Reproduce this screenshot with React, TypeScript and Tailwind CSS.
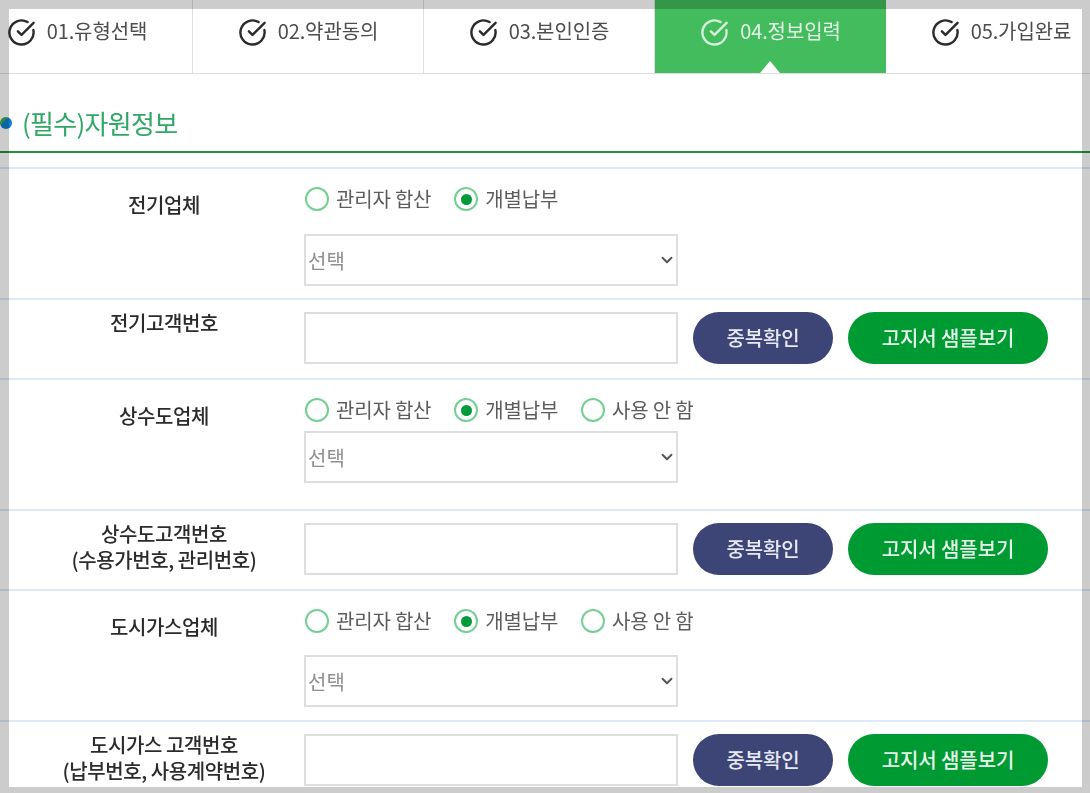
import { ChevronDown, CircleCheckBig } from 'lucide-react'

const font = { fontFamily: '"Noto Sans CJK KR", "Noto Sans", sans-serif' }

const steps = ['01.유형선택', '02.약관동의', '03.본인인증', '04.정보입력', '05.가입완료']

function StepTabs() {
  return (
    <div className="flex h-[74px] -ml-[38px] w-[1155px] border-b border-[#dedede]">
      {steps.map((s, i) => {
        const active = i === 3
        return (
          <div
            key={s}
            className={
              active
                ? 'relative flex w-[231px] shrink-0 justify-center gap-[11px] pt-[18px] bg-[#43bc5d] text-[#e4f6e8]'
                : 'flex w-[231px] shrink-0 justify-center gap-[11px] pt-[18px] border-r border-[#dedede] text-[#4d4d4d]'
            }
          >
            <CircleCheckBig size={29} strokeWidth={2} className={active ? 'text-[#d5f0da]' : 'text-[#2b2b2b]'} />
            <span className="text-[20px] leading-[26px] tracking-[-0.1px]">{s}</span>
            {active && (
              <span className="absolute bottom-0 left-[105px] h-0 w-0 border-x-[10px] border-b-[12px] border-x-transparent border-b-white" />
            )}
          </div>
        )
      })}
    </div>
  )
}

function Radio({ label, checked }: { label: string; checked?: boolean }) {
  return (
    <label className="flex items-center gap-[7px]">
      <span className="flex h-[24px] w-[24px] items-center justify-center rounded-full border-2 border-[#74cf92] bg-white">
        {checked && <span className="h-[11px] w-[11px] rounded-full bg-[#009a3a]" />}
      </span>
      <span className="text-[20px] leading-[24px] tracking-[-0.2px] text-[#5c5c5c]">{label}</span>
    </label>
  )
}

function Radios({ third }: { third?: boolean }) {
  return (
    <div className="flex gap-[23px] pl-[1px]">
      <Radio label="관리자 합산" />
      <Radio label="개별납부" checked />
      {third && <Radio label="사용 안 함" />}
    </div>
  )
}

function VendorRow({ label, third, pt, gap }: { label: string; third?: boolean; pt: string; gap: string }) {
  return (
    <div className="flex h-[131px] border-t-2 border-[#dde9f6]">
      <div className="w-[280px] ml-[24px] pt-[23px] text-center text-[20px] leading-[26px] tracking-[-0.4px] font-medium text-[#2b2b2b]">
        {label}
      </div>
      <div className={pt}>
        <Radios third={third} />
        <div className={`${gap} relative w-[374px]`}>
          <select
            defaultValue=""
            className="block h-[52px] w-full appearance-none border-2 border-[#dedede] bg-white pl-[2px] pt-[2px] text-[20px] text-[#8f8f8f]"
          >
            <option value="">선택</option>
          </select>
          <ChevronDown size={18} strokeWidth={2.5} className="pointer-events-none absolute right-[2px] top-[17px] text-[#555555]" />
        </div>
      </div>
    </div>
  )
}

function NumberRow({ lines }: { lines: string[] }) {
  return (
    <div className="flex h-[80px] border-t-2 border-[#dde9f6]">
      <div className="w-[280px] ml-[24px] pt-[10px] text-center text-[20px] leading-[26px] tracking-[-0.4px] font-medium text-[#2b2b2b]">
        {lines.map((l) => (
          <div key={l}>{l}</div>
        ))}
      </div>
      <div className="flex gap-[15px] pt-[12px]">
        <input className="h-[52px] w-[374px] border-2 border-[#dedede] bg-white" />
        <button className="h-[52px] w-[140px] rounded-[26px] bg-[#3d4577] text-[20px] tracking-[-0.2px] font-medium text-[#e6e8f2]">
          중복확인
        </button>
        <button className="h-[52px] w-[200px] rounded-[26px] bg-[#009a33] text-[20px] tracking-[-0.1px] font-medium text-[#e6f5ea]">
          고지서 샘플보기
        </button>
      </div>
    </div>
  )
}

export default function App() {
  return (
    <div className="relative h-[793px] w-[1090px] overflow-hidden bg-white" style={font}>
      <div className="blur-[0.7px]">
        <StepTabs />

        <div className="flex h-[79px] items-center gap-[10px] border-b-2 border-[#1f9438] pt-[20px]">
          <span className="relative z-10 h-[12px] w-[12px] shrink-0 rounded-full bg-[linear-gradient(135deg,#3aa655_35%,#0a7fd0_35%)]" />
          <h2 className="text-[26px] leading-[32px] tracking-[-0.7px] text-[#2fa866]">(필수)자원정보</h2>
        </div>

        <div className="mt-[14px]">
          <VendorRow label="전기업체" pt="pt-[18px]" gap="mt-[23px]" />
          <NumberRow lines={['전기고객번호']} />
          <VendorRow label="상수도업체" third pt="pt-[18px]" gap="mt-[9px]" />
          <NumberRow lines={['상수도고객번호', '(수용가번호, 관리번호)']} />
          <VendorRow label="도시가스업체" third pt="pt-[18px]" gap="mt-[22px]" />
          <NumberRow lines={['도시가스 고객번호', '(납부번호, 사용계약번호)']} />
        </div>
      </div>

      {/* translucent frame from the capture */}
      <div className="pointer-events-none absolute inset-0 border-t-[9px] border-l-[9px] border-r-[8px] border-b-[6px] border-black/20" />
    </div>
  )
}
